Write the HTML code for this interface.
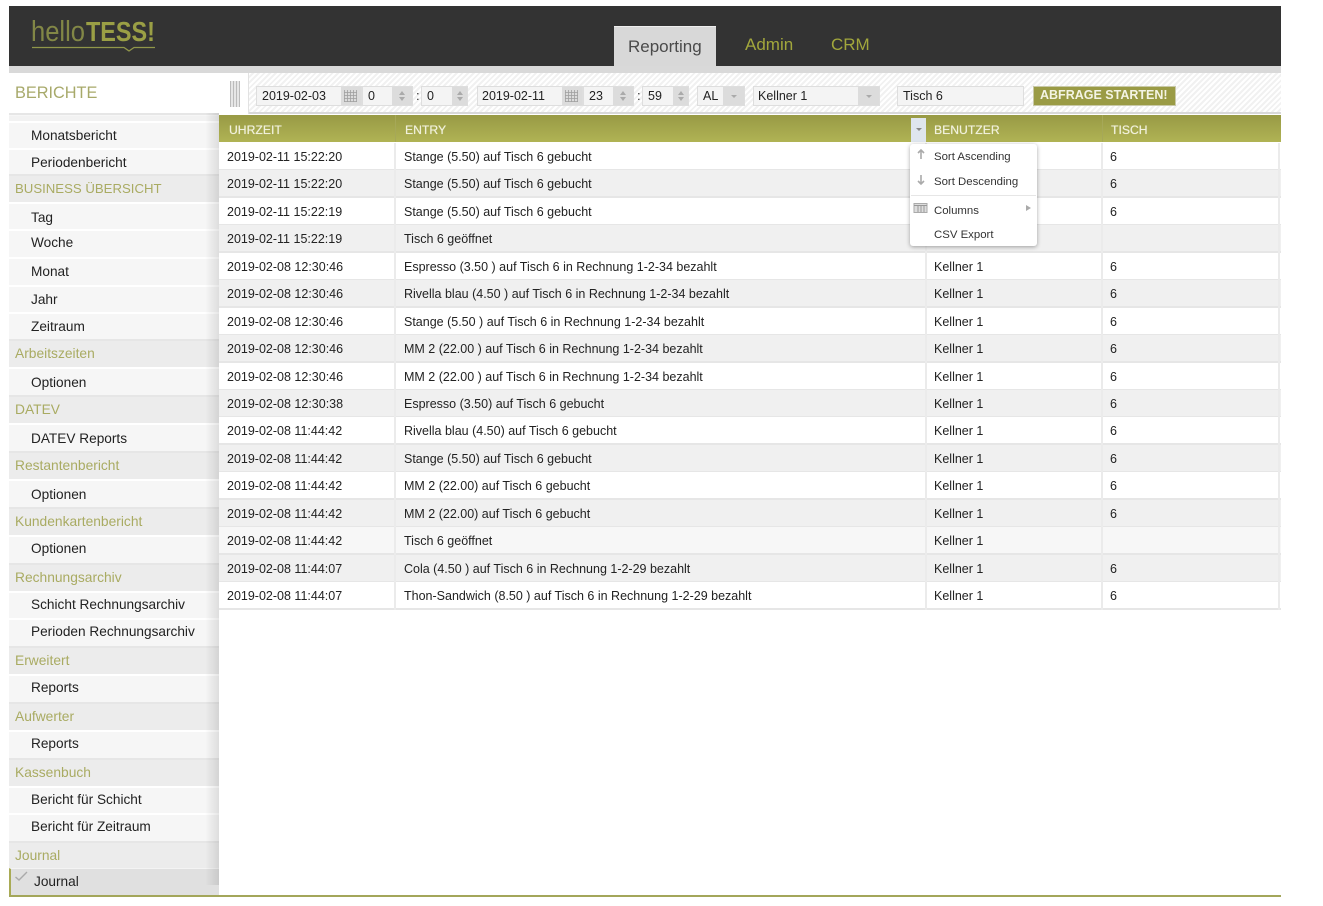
<!DOCTYPE html>
<html><head><meta charset="utf-8"><title>helloTESS</title>
<style>
html,body{margin:0;padding:0;background:#fff;width:1323px;height:906px;overflow:hidden}
body{position:relative;font-family:"Liberation Sans",sans-serif;color:#222;-webkit-font-smoothing:antialiased}
div,span{position:absolute;white-space:nowrap;box-sizing:border-box}
.r{left:219px;width:1062px;height:28px;border-bottom:2px solid #e6e6e6;background:#fff;font-size:12.5px;line-height:29px}
.g{background:#f0f0f0}
.r span{top:0}
.a{left:8px}.b{left:185px}.c{left:715px}.d{left:891px}
.v{top:143px;width:2px;height:467px;background:#ebebeb}
.th{top:115px;height:27px;line-height:31px;font-size:12.2px;color:#f1f1dc;text-shadow:0 0 .6px #f1f1dc}
.h{left:9px;width:210px;height:28px;background:#ececec;color:#a9ab62;font-size:13.8px;line-height:26px;padding-left:6px;border-top:2px solid #e6e6e6}
.i{left:9px;width:210px;height:27px;background:#f6f6f6;color:#222;font-size:13.65px;line-height:24px;padding-left:22px;border-top:2px solid #fff}
.f{top:86px;height:20px;background:#f4f4f4;border:1px solid #dedede;font-size:12.5px;line-height:19px;padding-left:5px;color:#222}
.t{top:0;right:0;height:18px;background:#dcdcdc}
.m{left:934px;font-size:11.4px;line-height:14px;color:#333}
.tab{top:36px;font-size:17px;line-height:20px;color:#a2a73c}
.up{left:50%;margin-left:-3px;top:4px;border:3px solid transparent;border-top:0;border-bottom:4px solid #aaa;width:0;height:0}
.dn{left:50%;margin-left:-3px;top:10px;border:3px solid transparent;border-bottom:0;border-top:4px solid #aaa;width:0;height:0}
.tri{left:50%;margin-left:-3px;top:8px;border:3px solid transparent;border-bottom:0;border-top:3px solid #aaa;width:0;height:0}
.cal{left:3px;top:3px;width:13px;height:12px;background:repeating-linear-gradient(90deg,rgba(160,160,160,.8) 0 1px,transparent 1px 3px),repeating-linear-gradient(0deg,rgba(160,160,160,.8) 0 1px,transparent 1px 3px)}
.sep{color:#333;top:88px;font-size:13px;line-height:16px}
</style></head><body>

<!-- Header -->
<div style="left:9px;top:6px;width:1272px;height:60px;background:#333"></div>
<div style="left:9px;top:66px;width:1272px;height:7px;background:#d9d9d9"></div>
<svg style="position:absolute;left:9px;top:6px" width="200" height="60">
<text x="22" y="35" font-family="Liberation Sans" font-size="29" fill="#90964a" textLength="54" lengthAdjust="spacingAndGlyphs" opacity=".85">hello</text>
<text x="77" y="35" font-family="Liberation Sans" font-weight="bold" font-size="28" fill="#9a9f45" textLength="69" lengthAdjust="spacingAndGlyphs">TESS!</text>
<path d="M23 41.5H115L120 45L125 41.500H146" fill="none" stroke="#90964a" stroke-width="1.3"/>
</svg>
<div style="left:614px;top:26px;width:102px;height:40px;background:#d8d8d8;border-top:1px solid #eee"></div>
<div class="tab" style="left:628px;color:#4a4a4a;top:37px">Reporting</div>
<div class="tab" style="left:745px;top:35px">Admin</div>
<div class="tab" style="left:831px;top:35px">CRM</div>

<!-- Toolbar -->
<div style="left:249px;top:73px;width:1032px;height:41px;background:repeating-linear-gradient(135deg,#fff 0 2px,#f1f1f1 2px 4px);border-bottom:2px solid #d8d8d8"></div>
<div style="left:248px;top:73px;width:1px;height:41px;background:#e2e2e2"></div>
<div style="left:15px;top:83px;font-size:16.3px;line-height:21px;color:#a7a96a">BERICHTE</div>
<div style="left:230px;top:81px;width:10px;height:26px;background:repeating-linear-gradient(90deg,#bbb 0 1px,#e6e6e6 1px 3px)"></div>

<div class="f" style="left:256px;width:106px">2019-02-03<span class="t" style="width:20px"><span class="cal"></span></span></div>
<div class="f" style="left:362px;width:51px;padding-left:5px">0<span class="t" style="width:20px"><span class="up"></span><span class="dn"></span></span></div>
<div class="sep" style="left:416px">:</div>
<div class="f" style="left:421px;width:47px">0<span class="t" style="width:15px"><span class="up"></span><span class="dn"></span></span></div>
<div class="f" style="left:477px;width:106px;padding-left:4px">2019-02-11<span class="t" style="width:20px"><span class="cal"></span></span></div>
<div class="f" style="left:583px;width:51px">23<span class="t" style="width:20px"><span class="up"></span><span class="dn"></span></span></div>
<div class="sep" style="left:637px">:</div>
<div class="f" style="left:642px;width:47px">59<span class="t" style="width:15px"><span class="up"></span><span class="dn"></span></span></div>
<div class="f" style="left:697px;width:48px">AL<span class="t" style="width:21px"><span class="tri"></span></span></div>
<div class="f" style="left:753px;width:127px;padding-left:4px">Kellner 1<span class="t" style="width:21px"><span class="tri"></span></span></div>
<div class="f" style="left:897px;width:127px;line-height:18px">Tisch 6</div>
<div style="left:1033px;top:86px;width:143px;height:20px;background:#9a9b45;border:1px solid #c9c9a8;color:#f4f4e4;font-weight:bold;font-size:12.5px;line-height:16px;padding-left:6px">ABFRAGE STARTEN!</div>

<!-- Sidebar -->
<div style="left:9px;top:113px;width:210px;height:783px;background:#f6f6f6"></div>
<div style="left:9px;top:113px;width:210px;height:2px;background:#e6e6e6"></div>
<div class="i" style="top:116px;height:5px;border:0;background:#f2f2f2"></div>
<div class="i" style="top:121px;line-height:25px">Monatsbericht</div>
<div class="i" style="top:148px;line-height:25px">Periodenbericht</div>
<div class="h" style="top:174px;font-size:13.2px">BUSINESS ÜBERSICHT</div>
<div class="i" style="top:202px;height:29px;line-height:28px">Tag</div>
<div class="i" style="top:229px">Woche</div>
<div class="i" style="top:257px;height:29px;line-height:26px">Monat</div>
<div class="i" style="top:285px;line-height:25px">Jahr</div>
<div class="i" style="top:312px;line-height:25px">Zeitraum</div>
<div class="h" style="top:339px">Arbeitszeiten</div>
<div class="i" style="top:367px;height:29px;line-height:27px">Optionen</div>
<div class="h" style="top:395px">DATEV</div>
<div class="i" style="top:423px;height:29px;line-height:27px">DATEV Reports</div>
<div class="h" style="top:451px">Restantenbericht</div>
<div class="i" style="top:479px;height:29px;line-height:27px">Optionen</div>
<div class="h" style="top:507px">Kundenkartenbericht</div>
<div class="i" style="top:535px">Optionen</div>
<div class="h" style="top:563px">Rechnungsarchiv</div>
<div class="i" style="top:591px">Schicht Rechnungsarchiv</div>
<div class="i" style="top:618px">Perioden Rechnungsarchiv</div>
<div class="h" style="top:646px">Erweitert</div>
<div class="i" style="top:674px">Reports</div>
<div class="h" style="top:702px">Aufwerter</div>
<div class="i" style="top:730px">Reports</div>
<div class="h" style="top:758px">Kassenbuch</div>
<div class="i" style="top:786px">Bericht für Schicht</div>
<div class="i" style="top:813px">Bericht für Zeitraum</div>
<div class="h" style="top:841px">Journal</div>
<div class="i" style="top:868px;height:27px;background:#e0e0e0;padding-left:23px;border-left:2px solid #a9ab55;border-top:1px solid #f4f4f4;line-height:25px">Journal</div>
<svg style="position:absolute;left:14px;top:870px" width="15" height="12"><path d="M1.500 7L5 10L13 2" fill="none" stroke="#aaa" stroke-width="1.400"/></svg>
<div style="left:205px;top:113px;width:14px;height:772px;background:linear-gradient(90deg,rgba(0,0,0,0),rgba(0,0,0,.1))"></div>
<div style="left:9px;top:895px;width:1272px;height:2px;background:#a3a65a"></div>

<!-- Table -->
<div style="left:219px;top:115px;width:1062px;height:27px;background:linear-gradient(#989a45,#b0b354)"></div>
<div style="left:395px;top:115px;width:1px;height:27px;background:#a6a858"></div>
<div style="left:1102px;top:115px;width:1px;height:27px;background:#a6a858"></div>
<div class="th" style="left:229px">UHRZEIT</div>
<div class="th" style="left:405px">ENTRY</div>
<div class="th" style="left:934px">BENUTZER</div>
<div class="th" style="left:1111px">TISCH</div>

<div class="r" style="top:142.5px"><span class="a">2019-02-11 15:22:20</span><span class="b">Stange (5.50) auf Tisch 6 gebucht</span><span class="c">Kellner 1</span><span class="d">6</span></div>
<div class="r g" style="top:170px"><span class="a">2019-02-11 15:22:20</span><span class="b">Stange (5.50) auf Tisch 6 gebucht</span><span class="c">Kellner 1</span><span class="d">6</span></div>
<div class="r" style="top:197.5px"><span class="a">2019-02-11 15:22:19</span><span class="b">Stange (5.50) auf Tisch 6 gebucht</span><span class="c">Kellner 1</span><span class="d">6</span></div>
<div class="r g" style="top:225px"><span class="a">2019-02-11 15:22:19</span><span class="b">Tisch 6 geöffnet</span><span class="c">Kellner 1</span></div>
<div class="r" style="top:252.5px"><span class="a">2019-02-08 12:30:46</span><span class="b">Espresso (3.50 ) auf Tisch 6 in Rechnung 1-2-34 bezahlt</span><span class="c">Kellner 1</span><span class="d">6</span></div>
<div class="r g" style="top:280px"><span class="a">2019-02-08 12:30:46</span><span class="b">Rivella blau (4.50 ) auf Tisch 6 in Rechnung 1-2-34 bezahlt</span><span class="c">Kellner 1</span><span class="d">6</span></div>
<div class="r" style="top:307.5px"><span class="a">2019-02-08 12:30:46</span><span class="b">Stange (5.50 ) auf Tisch 6 in Rechnung 1-2-34 bezahlt</span><span class="c">Kellner 1</span><span class="d">6</span></div>
<div class="r g" style="top:335px"><span class="a">2019-02-08 12:30:46</span><span class="b">MM 2 (22.00 ) auf Tisch 6 in Rechnung 1-2-34 bezahlt</span><span class="c">Kellner 1</span><span class="d">6</span></div>
<div class="r" style="top:362.5px"><span class="a">2019-02-08 12:30:46</span><span class="b">MM 2 (22.00 ) auf Tisch 6 in Rechnung 1-2-34 bezahlt</span><span class="c">Kellner 1</span><span class="d">6</span></div>
<div class="r g" style="top:390px"><span class="a">2019-02-08 12:30:38</span><span class="b">Espresso (3.50) auf Tisch 6 gebucht</span><span class="c">Kellner 1</span><span class="d">6</span></div>
<div class="r" style="top:417px"><span class="a">2019-02-08 11:44:42</span><span class="b">Rivella blau (4.50) auf Tisch 6 gebucht</span><span class="c">Kellner 1</span><span class="d">6</span></div>
<div class="r g" style="top:444.5px"><span class="a">2019-02-08 11:44:42</span><span class="b">Stange (5.50) auf Tisch 6 gebucht</span><span class="c">Kellner 1</span><span class="d">6</span></div>
<div class="r" style="top:472px"><span class="a">2019-02-08 11:44:42</span><span class="b">MM 2 (22.00) auf Tisch 6 gebucht</span><span class="c">Kellner 1</span><span class="d">6</span></div>
<div class="r g" style="top:499.5px"><span class="a">2019-02-08 11:44:42</span><span class="b">MM 2 (22.00) auf Tisch 6 gebucht</span><span class="c">Kellner 1</span><span class="d">6</span></div>
<div class="r" style="top:527px;background:#f7f7f7"><span class="a">2019-02-08 11:44:42</span><span class="b">Tisch 6 geöffnet</span><span class="c">Kellner 1</span></div>
<div class="r g" style="top:554.5px"><span class="a">2019-02-08 11:44:07</span><span class="b">Cola (4.50 ) auf Tisch 6 in Rechnung 1-2-29 bezahlt</span><span class="c">Kellner 1</span><span class="d">6</span></div>
<div class="r" style="top:582px"><span class="a">2019-02-08 11:44:07</span><span class="b">Thon-Sandwich (8.50 ) auf Tisch 6 in Rechnung 1-2-29 bezahlt</span><span class="c">Kellner 1</span><span class="d">6</span></div>
<div class="v" style="left:394px"></div>
<div class="v" style="left:925px"></div>
<div class="v" style="left:1101px"></div>
<div class="v" style="left:1278px"></div>

<!-- Column menu -->
<div style="left:911px;top:118px;width:15px;height:24px;background:#dfe6ee"><span class="tri" style="top:10px;border-top-color:#888"></span></div>
<div style="left:910px;top:144px;width:127px;height:102px;background:#fff;border-radius:3px;box-shadow:0 1px 4px rgba(0,0,0,.35)"></div>
<div style="left:911px;top:195px;width:125px;height:1px;background:#e6e6e6"></div>
<svg style="position:absolute;left:913px;top:148px" width="16" height="90">
<path d="M8 11V2M5 5L8 2L11 5" fill="none" stroke="#aaa" stroke-width="1.600"/>
<path d="M8 27V36M5 33L8 36L11 33" fill="none" stroke="#aaa" stroke-width="1.600"/>
<rect x="1" y="55.500" width="13" height="9" fill="#ddd" stroke="#aaa"/><path d="M1 57.500H14M5 58V64M8 58V64M11 58V64" stroke="#999" fill="none"/>
</svg>
<div class="m" style="top:150px">Sort Ascending</div>
<div class="m" style="top:175px">Sort Descending</div>
<div class="m" style="top:204px">Columns</div>
<div class="m" style="top:228px">CSV Export</div>
<div style="left:1026px;top:205px;width:0;height:0;border:3.500px solid transparent;border-left:5px solid #aaa;border-right:0"></div>

</body></html>
